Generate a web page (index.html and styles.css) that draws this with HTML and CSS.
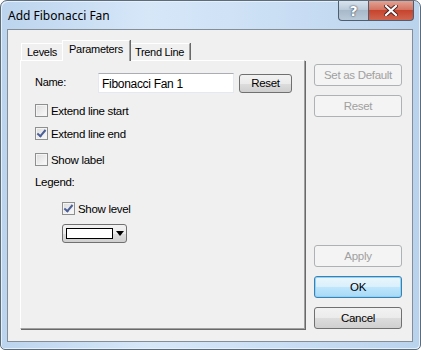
FILE: index.html
```html
<!DOCTYPE html>
<html lang="en">
<head>
    <meta charset="UTF-8">
    <title>Add Fibonacci Fan</title>
    <link rel="stylesheet" href="styles.css">
</head>
<body>
    <div class="window">
        <div class="titlebar">
            <span class="title">Add Fibonacci Fan</span>
            <div class="caption-buttons">
                <div class="cap-btn help">?</div>
                <div class="cap-btn close">
                    <svg width="14" height="11" viewBox="0 0 14 11">
                        <path d="M2 1 L12 10 M12 1 L2 10" stroke="#4a2020" stroke-width="4" stroke-linecap="square"/>
                        <path d="M2 1 L12 10 M12 1 L2 10" stroke="#fff" stroke-width="2.2" stroke-linecap="square"/>
                    </svg>
                </div>
            </div>
        </div>
        <div class="client">
            <div class="tabs">
                <div class="tab-strip">
                    <div class="tab levels">Levels</div>
                    <div class="tab active">Parameters</div>
                    <div class="tab trend">Trend Line</div>
                </div>
                <div class="panel">
                    <div class="name-row">
                        <span class="name-label">Name:</span>
                        <div class="textbox">Fibonacci Fan 1</div>
                        <div class="btn small">Reset</div>
                    </div>
                    <label class="check first"><span class="box"></span>Extend line start</label>
                    <label class="check"><span class="box checked"></span>Extend line end</label>
                    <label class="check third"><span class="box"></span>Show label</label>
                    <div class="legend">Legend:</div>
                    <div class="legend-body">
                        <label class="check"><span class="box checked"></span>Show level</label>
                        <div class="combo">
                            <span class="swatch"></span>
                            <span class="arrow"></span>
                        </div>
                    </div>
                </div>
            </div>
            <div class="side">
                <div class="btn disabled">Set as Default</div>
                <div class="btn disabled">Reset</div>
                <div class="btn disabled push">Apply</div>
                <div class="btn default">OK</div>
                <div class="btn">Cancel</div>
            </div>
        </div>
    </div>
</body>
</html>
```

FILE: styles.css
```css
html, body {
    margin: 0;
    padding: 0;
}
body {
    width: 421px;
    height: 350px;
    background: #fff;
    font-family: "Liberation Sans", Arial, sans-serif;
    font-size: 11px;
    letter-spacing: -0.3px;
    color: #000;
}
.window {
    box-sizing: border-box;
    width: 421px;
    height: 350px;
    border: 1px solid #5d6c7b;
    border-radius: 7px 7px 5px 5px;
    background: linear-gradient(to right, #bcd4ee 0%, #d6e7f8 35%, #cfe2f6 55%, #bad3ed 100%);
    box-shadow: inset 1px 1px 0 #e6f0fa, inset -1px -1px 0 #e6f0fa;
    display: flex;
    flex-direction: column;
}
.titlebar {
    height: 28px;
    display: flex;
    align-items: flex-start;
    justify-content: space-between;
}
.title {
    font-family: "Noto Sans", "Open Sans", sans-serif;
    font-size: 12px;
    letter-spacing: 0;
    margin: 6px 0 0 7px;
    color: #000;
}
.caption-buttons {
    display: flex;
    margin-right: 6px;
}
.cap-btn {
    box-sizing: border-box;
    height: 20px;
    display: flex;
    align-items: center;
    justify-content: center;
    border: 1px solid #4d5e70;
    border-top: none;
}
.help {
    width: 30px;
    border-radius: 0 0 0 4px;
    border-right: none;
    background: linear-gradient(#d8e4ef 0%, #bccbda 45%, #a8b9ca 50%, #b9c9d8 100%);
    color: #fff;
    font-family: "DejaVu Sans", sans-serif;
    font-weight: bold;
    font-size: 14px;
    text-shadow: 0 0 2px #3b4a5a, 0 0 1px #3b4a5a;
}
.close {
    width: 46px;
    border-radius: 0 0 4px 0;
    background: linear-gradient(#e3a293 0%, #d47563 45%, #c7442d 50%, #d06650 100%);
}
.client {
    box-sizing: border-box;
    flex: 1;
    margin: 0 7px 7px 6px;
    border: 1px solid #848e99;
    background: #f0f0f0;
    display: flex;
    gap: 8px;
    padding: 10px 10px 12px 12px;
}
.tabs {
    width: 286px;
    display: flex;
    flex-direction: column;
}
.tab-strip {
    height: 20px;
    display: flex;
    align-items: flex-end;
    padding-left: 1px;
    position: relative;
    z-index: 1;
}
.tab {
    box-sizing: border-box;
    height: 17px;
    padding-top: 2px;
    text-align: center;
    border: 1px solid #a0a0a0;
    border-bottom: none;
    border-left-color: #fff;
    border-top-color: #fff;
    background: #f0f0f0;
    box-shadow: 1px 0 0 #696969;
}
.tab.levels {
    width: 42px;
}
.tab.trend {
    width: 61px;
}
.tab.active {
    width: 68px;
    height: 21px;
    margin: 0 -1px -1px -1px;
    position: relative;
    z-index: 2;
}
.panel {
    box-sizing: border-box;
    flex: 1;
    border: 1px solid #a0a0a0;
    border-left-color: #fff;
    border-top-color: #fff;
    box-shadow: 1px 1px 0 #696969;
    margin-right: 1px;
    padding: 12px 0 0 14px;
    display: flex;
    flex-direction: column;
}
.name-row {
    display: flex;
    align-items: center;
    height: 20px;
}
.name-label {
    width: 63px;
    margin-top: -3px;
}
.textbox {
    box-sizing: border-box;
    width: 136px;
    height: 20px;
    border: 1px solid #e3e9ef;
    border-top-color: #abadb3;
    background: #fff;
    padding: 3px 0 0 3px;
    font-size: 12px;
}
.btn {
    box-sizing: border-box;
    height: 22px;
    border: 1px solid #707070;
    border-radius: 3px;
    background: linear-gradient(#f2f2f2 0%, #ebebeb 50%, #dddddd 51%, #cfcfcf 100%);
    display: flex;
    align-items: center;
    justify-content: center;
    font-size: 11.5px;
}
.btn.small {
    width: 53px;
    height: 19px;
    margin-left: 5px;
}
.check {
    display: flex;
    align-items: center;
    height: 13px;
    margin-top: 10px;
    font-size: 11.5px;
}
.check.first {
    margin-top: 11px;
}
.check.third {
    margin-top: 13px;
}
.box {
    box-sizing: border-box;
    width: 13px;
    height: 13px;
    margin-right: 3px;
    border: 1px solid #8e8f8f;
    background: linear-gradient(135deg, #dcdcdc, #fbfbfb);
    box-shadow: inset 0 0 0 1px #f4f4f4;
    position: relative;
}
.box.checked::after {
    content: "";
    position: absolute;
    left: 3px;
    top: 0px;
    width: 3px;
    height: 7px;
    border: solid #4a5f97;
    border-width: 0 2px 2px 0;
    transform: rotate(40deg);
}
.legend {
    margin-top: 10px;
    height: 13px;
    font-size: 11.5px;
}
.legend-body {
    padding-left: 27px;
}
.legend-body .check {
    margin-top: 13px;
}
.combo {
    box-sizing: border-box;
    width: 65px;
    height: 19px;
    margin-top: 9px;
    border: 1px solid #707070;
    border-radius: 3px;
    background: linear-gradient(#f2f2f2 0%, #ebebeb 50%, #dddddd 51%, #cfcfcf 100%);
    display: flex;
    align-items: center;
    padding-left: 3px;
}
.swatch {
    box-sizing: border-box;
    width: 47px;
    height: 11px;
    border: 1px solid #000;
    background: #fff;
}
.arrow {
    width: 0;
    height: 0;
    margin-left: 3px;
    border-left: 4px solid transparent;
    border-right: 4px solid transparent;
    border-top: 5px solid #000;
}
.side {
    width: 88px;
    display: flex;
    flex-direction: column;
    padding-top: 24px;
    gap: 9px;
}
.btn.disabled {
    border-color: #adb2b5;
    background: #f4f4f4;
    color: #a0a0a0;
}
.push {
    margin-top: auto;
}
.btn.default {
    border-color: #3c7fb1;
    background: linear-gradient(#eaf6fd 0%, #d9f0fc 50%, #bee6fd 51%, #a7d9f5 100%);
    box-shadow: inset 0 0 0 1px #8fd4f6;
}
```
